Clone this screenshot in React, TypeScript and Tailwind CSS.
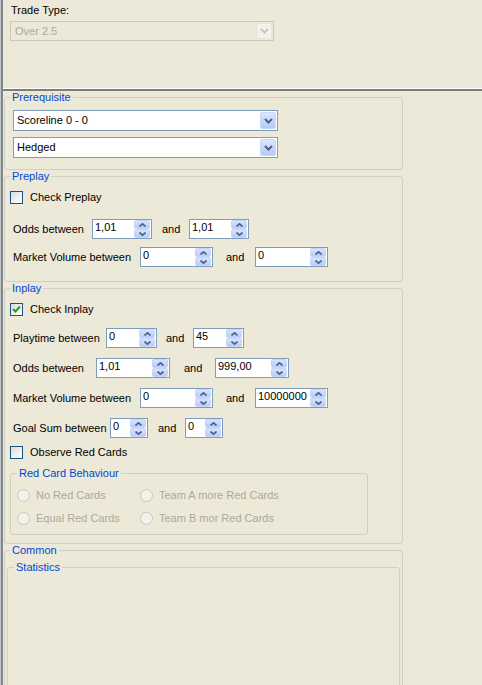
import React from "react";

function ComboArrow({ disabled }: { disabled?: boolean }) {
  return (
    <div
      className={
        disabled
          ? "w-[16px] my-[1px] mr-[1px] rounded-[2px] border border-[#e6e4dc] bg-[#f3f2ed] flex items-center justify-center"
          : "w-[16px] my-[1px] mr-[1px] rounded-[2px] border border-[#c8d7fb] bg-gradient-to-b from-[#dbe6fe] to-[#b6caf7] flex items-center justify-center"
      }
    >
      <svg width="9" height="6" viewBox="0 0 9 6">
        <path
          d="M1 1 L4.5 4.5 L8 1"
          fill="none"
          stroke={disabled ? "#c9c7ba" : "#4d6185"}
          strokeWidth="2"
        />
      </svg>
    </div>
  );
}

function Combo({ text }: { text: string }) {
  return (
    <div className="w-[265px] h-[21px] border border-[#7f9db9] bg-white flex">
      <div className="flex-1 pl-[3px] flex items-center text-black">{text}</div>
      <ComboArrow />
    </div>
  );
}

function SpinHalf({ up }: { up?: boolean }) {
  return (
    <div className="h-[9px] rounded-[2px] border border-[#c5d5fb] bg-gradient-to-b from-[#d7e3fe] to-[#b9ccf8] flex items-center justify-center">
      <svg width="7" height="4" viewBox="0 0 7 4">
        <path
          d={up ? "M0.5 3.5 L3.5 0.8 L6.5 3.5" : "M0.5 0.5 L3.5 3.2 L6.5 0.5"}
          fill="none"
          stroke="#4d6185"
          strokeWidth="1.6"
        />
      </svg>
    </div>
  );
}

function Spin({ value, w }: { value: string; w: string }) {
  return (
    <div className={`${w} h-[20px] shrink-0 border border-[#7f9db9] bg-white flex`}>
      <div className="flex-1 pl-[2px] pt-[1px] text-black overflow-hidden">{value}</div>
      <div className="w-[16px] mr-[1px] flex flex-col">
        <SpinHalf up />
        <SpinHalf />
      </div>
    </div>
  );
}

function RangeRow({
  label,
  labelW,
  spinW,
  andCls,
  a,
  b,
}: {
  label: string;
  labelW: string;
  spinW: string;
  andCls: string;
  a: string;
  b: string;
}) {
  return (
    <div className="flex items-center pl-[8px]">
      <span className={`${labelW} shrink-0 whitespace-nowrap`}>{label}</span>
      <Spin value={a} w={spinW} />
      <span className={`${andCls} shrink-0`}>and</span>
      <Spin value={b} w={spinW} />
    </div>
  );
}

function Check({ label, checked }: { label: string; checked?: boolean }) {
  return (
    <div className="flex items-center ml-[5px] h-[13px]">
      <div className="w-[13px] h-[13px] border border-[#1c5180] bg-gradient-to-br from-[#dcdcd7] to-white flex items-center justify-center">
        {checked && (
          <svg width="9" height="9" viewBox="0 0 9 9">
            <path d="M1 4 L3.5 6.5 L8 1.5" fill="none" stroke="#21a121" strokeWidth="2" />
          </svg>
        )}
      </div>
      <span className="ml-[7px] whitespace-nowrap">{label}</span>
    </div>
  );
}

function Radio({ label, w }: { label: string; w: string }) {
  return (
    <div className={`${w} flex items-center`}>
      <div className="w-[13px] h-[13px] rounded-full border border-[#cac8bb] bg-[#f2f1ea]" />
      <span className="ml-[6px] whitespace-nowrap text-[#aca899]">{label}</span>
    </div>
  );
}

function Legend({ children, cls }: { children: React.ReactNode; cls?: string }) {
  return <legend className={`${cls ?? "ml-[5px]"} px-[2px] text-[#0046d5]`}>{children}</legend>;
}

export default function App() {
  return (
    <div className="w-[482px] h-[685px] overflow-hidden bg-[#ece9d8] font-['Liberation_Sans',Arial,sans-serif] text-[11px] leading-[13px] text-black">
      <div className="h-full border-l border-[#c5c5bd]">
        <div className="h-full border-l-2 border-[#7b8794]">
          {/* trade type panel */}
          <div className="h-[88px] pl-[7px] pt-[4px]">
            <div className="pl-[1px]">Trade Type:</div>
            <div className="mt-[4px] w-[264px] h-[20px] border border-[#c9c7ba] flex">
              <div className="flex-1 pl-[4px] flex items-center text-[#aca899]">Over 2.5</div>
              <ComboArrow disabled />
            </div>
          </div>
          <div className="h-[1px] bg-white" />
          <div className="h-[2px] bg-[#7e7e78]" />

          <div className="pl-[1px]">
            {/* Prerequisite */}
            <fieldset className="w-[399px] border border-[#d0d0bf] rounded-[3px]">
              <Legend>Prerequisite</Legend>
              <div className="pl-[8px] pt-[6px] pb-[11px] flex flex-col gap-[6px]">
                <Combo text="Scoreline 0 - 0" />
                <Combo text="Hedged" />
              </div>
            </fieldset>

            {/* Preplay */}
            <fieldset className="w-[399px] border border-[#d0d0bf] rounded-[3px]">
              <Legend>Preplay</Legend>
              <div className="pt-[8px] pb-[14px]">
                <Check label="Check Preplay" />
                <div className="mt-[15px]">
                  <RangeRow label="Odds between" labelW="w-[79px]" spinW="w-[60px]" andCls="ml-[10px] w-[27px]" a="1,01" b="1,01" />
                </div>
                <div className="mt-[8px]">
                  <RangeRow label="Market Volume between" labelW="w-[127px]" spinW="w-[73px]" andCls="ml-[13px] w-[29px]" a="0" b="0" />
                </div>
              </div>
            </fieldset>

            {/* Inplay */}
            <fieldset className="w-[399px] border border-[#d0d0bf] rounded-[3px]">
              <Legend>Inplay</Legend>
              <div className="pt-[8px] pb-[8px]">
                <Check label="Check Inplay" checked />
                <div className="mt-[12px] flex flex-col gap-[10px]">
                  <RangeRow label="Playtime between" labelW="w-[93px]" spinW="w-[51px]" andCls="ml-[9px] w-[27px]" a="0" b="45" />
                  <RangeRow label="Odds between" labelW="w-[83px]" spinW="w-[74px]" andCls="ml-[14px] w-[31px]" a="1,01" b="999,00" />
                  <RangeRow label="Market Volume between" labelW="w-[127px]" spinW="w-[73px]" andCls="ml-[13px] w-[29px]" a="0" b="10000000" />
                  <RangeRow label="Goal Sum between" labelW="w-[97px]" spinW="w-[38px]" andCls="ml-[10px] w-[27px]" a="0" b="0" />
                </div>
                <div className="mt-[8px]">
                  <Check label="Observe Red Cards" />
                </div>
                <fieldset className="mt-[8px] ml-[5px] w-[358px] border border-[#d0d0bf] rounded-[3px]">
                  <Legend cls="ml-[6px]">Red Card Behaviour</Legend>
                  <div className="pl-[6px] pt-[9px] pb-[9px] flex flex-col gap-[10px]">
                    <div className="flex">
                      <Radio label="No Red Cards" w="w-[123px]" />
                      <Radio label="Team A more Red Cards" w="w-[200px]" />
                    </div>
                    <div className="flex">
                      <Radio label="Equal Red Cards" w="w-[123px]" />
                      <Radio label="Team B mor Red Cards" w="w-[200px]" />
                    </div>
                  </div>
                </fieldset>
              </div>
            </fieldset>

            {/* Common */}
            <fieldset className="w-[399px] h-[220px] border border-[#d0d0bf] rounded-[3px]">
              <Legend>Common</Legend>
              <fieldset className="mt-[4px] ml-[2px] w-[393px] h-[180px] border border-[#d0d0bf] rounded-[3px]">
                <Legend cls="ml-[6px]">Statistics</Legend>
              </fieldset>
            </fieldset>
          </div>
        </div>
      </div>
    </div>
  );
}
